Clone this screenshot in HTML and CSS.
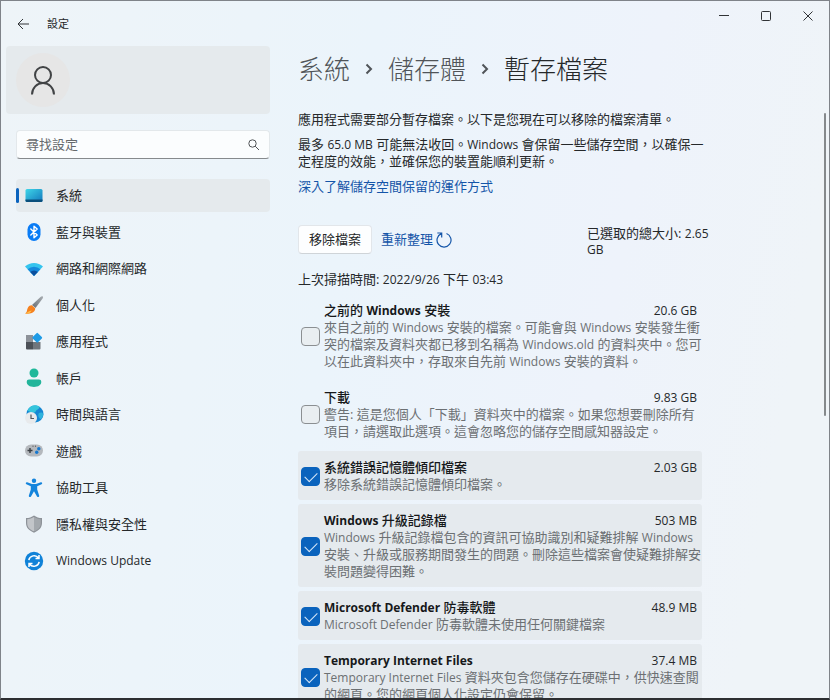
FILE: index.html
```html
<!DOCTYPE html>
<html lang="zh-Hant">
<head>
<meta charset="utf-8">
<meta name="viewport" content="width=device-width, initial-scale=1">
<title>設定</title>
<link rel="stylesheet" href="styles.css">
</head>
<body>
<div class="window">
	<!-- S 標題列 -->
	<header class="titlebar">
		<button class="bt_back" aria-label="返回"><svg width="12" height="12" viewBox="0 0 12 12"><path d="M6 1 1 6l5 5M1 6h11"/></svg></button>
		<span class="title">設定</span>
		<div class="win_op">
			<button aria-label="最小化"><svg width="10" height="10" viewBox="0 0 10 10"><path d="M0 4.500h10"/></svg></button>
			<button aria-label="最大化"><svg width="10" height="10" viewBox="0 0 10 10"><rect x=".5" y=".5" width="9" height="9" rx="1"/></svg></button>
			<button aria-label="關閉"><svg width="10" height="10" viewBox="0 0 10 10"><path d="M.5.5l9 9M9.5.5l-9 9"/></svg></button>
		</div>
	</header>
	<!-- E 標題列 -->
	<div class="body">
		<!-- S 側邊欄 -->
		<aside class="side">
			<div class="user_info">
				<span class="pic"><svg width="28" height="32" viewBox="0 0 28 32"><circle cx="14" cy="11" r="8"/><path d="M3 30.500a11 11.500 0 0 1 22 0"/></svg></span>
			</div>
			<div class="search">
				<input type="search" placeholder="尋找設定" aria-label="尋找設定">
				<svg width="12" height="12" viewBox="0 0 12 12"><circle cx="4.500" cy="4.500" r="3.700"/><path d="M7.200 7.200 11 11"/></svg>
			</div>
			<nav>
				<ul class="menu">
					<li><a href="#" class="on"><svg viewBox="0 0 20 20"><defs><linearGradient id="gSys" x1="0" y1="0" x2="1" y2="1"><stop offset="0" stop-color="#3fd6e8"/><stop offset="1" stop-color="#1277bd"/></linearGradient></defs><rect x="1.500" y="3" width="17" height="13" rx="1.500" fill="url(#gSys)"/><path d="M1.500 13.500h17v1a1.500 1.500 0 0 1-1.500 1.500H3a1.500 1.500 0 0 1-1.500-1.500z" fill="#0a4f7c"/></svg>系統</a></li>
					<li><a href="#"><svg viewBox="0 0 20 20"><rect x="3.500" y="1" width="13" height="18" rx="6.500" fill="#0a7cf5"/><path d="m6.800 7 6.400 6-3.200 2.800V4.200L13.200 7l-6.400 6" fill="none" stroke="#fff" stroke-width="1.400" stroke-linejoin="round" stroke-linecap="round"/></svg>藍牙與裝置</a></li>
					<li><a href="#"><svg viewBox="0 0 20 20"><path d="M1 7.500a13 13 0 0 1 18 0L10 17z" fill="#35c4ee"/><path d="M3.600 10.300a9.200 9.200 0 0 1 12.800 0L10 17z" fill="#1589dc"/><path d="M6.200 13a5.500 5.500 0 0 1 7.600 0L10 17z" fill="#0b4f9e"/></svg>網路和網際網路</a></li>
					<li><a href="#"><svg viewBox="0 0 20 20"><defs><linearGradient id="gBr" x1="0" y1="1" x2="1" y2="0"><stop offset="0" stop-color="#696f76"/><stop offset="1" stop-color="#a9aeb3"/></linearGradient></defs><path d="M18.500 1.300c.9.700.6 1.400.1 2.200L11.500 13 8 10l8.500-8c.8-.7 1.400-1.100 2-.7z" fill="url(#gBr)"/><path d="M7.800 10.300 11.200 13.200c.3 3.300-3.600 6.300-10 5.200C3.700 17 2.500 15 4 12.500c.8-1.400 2.300-2.300 3.800-2.200z" fill="#f5811f"/><path d="M1.200 18.400c2.600-.9 3.500-2.800 6.500-3-1 2.200-3.400 3.500-6.500 3z" fill="#ffc04a"/></svg>個人化</a></li>
					<li><a href="#"><svg viewBox="0 0 20 20"><path d="M2 3h7v7H2z" fill="#8d9299"/><path d="M2 10h7v7.500H3a1 1 0 0 1-1-1z" fill="#4c5158"/><path d="M9 10h7.500v6.500a1 1 0 0 1-1 1H9z" fill="#70767d"/><rect x="9.500" y="2" width="7.500" height="7.500" rx="1" transform="rotate(45 13.250 5.750)" fill="#1e9be6"/></svg>應用程式</a></li>
					<li><a href="#"><svg viewBox="0 0 20 20"><circle cx="10" cy="5" r="4.500" fill="#1fb89a"/><path d="M5 11.500h10a2.300 2.300 0 0 1 2.300 2.300c0 3.200-3 5.200-7.300 5.200s-7.300-2-7.300-5.200A2.300 2.300 0 0 1 5 11.500z" fill="#22b59b"/></svg>帳戶</a></li>
					<li><a href="#"><svg viewBox="0 0 20 20"><circle cx="11" cy="9" r="8.500" fill="#1587d3"/><path d="M3.500 5.500C6 0 12-1 15.500 1.800c-.5 3-3 2.500-4 5-1 2-4.500 1-8-1.300z" fill="#35c5dc"/><path d="M15 8c2-1 3.500-.5 4.400 1-.2 2-1.200 4-2.700 5.300C14.500 13 13.500 10 15 8z" fill="#2eb3dc"/><circle cx="7" cy="13" r="6" fill="#e8eaec"/><path d="M7 9.500v4h3" fill="none" stroke="#50555b" stroke-width="1.200"/></svg>時間與語言</a></li>
					<li><a href="#"><svg viewBox="0 0 20 20"><rect x="1" y="3.500" width="18" height="12" rx="6" fill="#b4b8bd"/><path d="M6 7v5M3.500 9.500h5" stroke="#3b4046" stroke-width="1.500"/><circle cx="14.800" cy="7.700" r="1.700" fill="#1678d0"/><circle cx="12.700" cy="11.300" r="1.700" fill="#1678d0"/><circle cx="9" cy="5.200" r=".6" fill="#555"/><circle cx="11.500" cy="5.200" r=".6" fill="#555"/></svg>遊戲</a></li>
					<li><a href="#"><svg viewBox="0 0 20 20"><circle cx="10" cy="2.700" r="2.200" fill="#1484dc"/><path d="M3.200 4.200 8 6h4l4.800-1.800c1.400-.3 1.900 1.400.8 2L13.200 8.200v3.300l2 6.300c.2 1.200-1.500 1.800-2.200.6L10 13.200l-3 5.200c-.7 1.200-2.400.6-2.200-.6l2-6.300V8.200L2.400 6.200c-1.100-.6-.6-2.300.8-2z" fill="#1484dc"/></svg>協助工具</a></li>
					<li><a href="#"><svg viewBox="0 0 20 20"><path d="M10 1.500c2.300 1.700 5 2.500 8 2.600v5c0 4.400-2.800 7.500-8 9.600-5.200-2.100-8-5.200-8-9.600v-5c3-.1 5.700-.9 8-2.600z" fill="#8d9298"/><path d="M10 3c2 1.300 4.200 2 6.800 2.200v4c0 3.700-2.300 6.300-6.800 8.100z" fill="#a3a8ad"/><path d="M10 3C8 4.300 5.800 5 3.200 5.200v4c0 3.700 2.300 6.300 6.800 8.100z" fill="#c2c5c9"/></svg>隱私權與安全性</a></li>
					<li><a href="#"><svg viewBox="0 0 20 20"><circle cx="10" cy="10" r="9.200" fill="#1082d8"/><path d="M4.800 9.200A5.400 5.400 0 0 1 14.500 7M15.200 10.800A5.400 5.400 0 0 1 5.500 13M15 4v3.500h-3.500M5 16v-3.500h3.500" fill="none" stroke="#fff" stroke-width="1.500"/></svg><span class="en">Windows Update</span></a></li>
				</ul>
			</nav>
		</aside>
		<!-- E 側邊欄 -->
		<!-- S 內容 -->
		<main class="cont">
			<h1 class="crumb">
				<a href="#">系統</a>
				<svg width="8" height="12" viewBox="0 0 8 12"><path d="m1.500 1.500 4.500 4.500-4.500 4.500"/></svg>
				<a href="#">儲存體</a>
				<svg width="8" height="12" viewBox="0 0 8 12"><path d="m1.500 1.500 4.500 4.500-4.500 4.500"/></svg>
				<span>暫存檔案</span>
			</h1>
			<p class="msg">應用程式需要部分暫存檔案。以下是您現在可以移除的檔案清單。</p>
			<p class="msg">最多 <span class="en">65.0 MB</span> 可能無法收回。<span class="en">Windows</span> 會保留一些儲存空間，以確保一<br>定程度的效能，並確保您的裝置能順利更新。</p>
			<p class="msg"><a href="#">深入了解儲存空間保留的運作方式</a></p>
			<div class="op">
				<button class="bt_remove">移除檔案</button>
				<button class="bt_refresh">重新整理<svg width="16" height="16" viewBox="0 0 16 16"><path d="M10.500 1.500a7 7 0 1 1-5.200.1M1.300 1h4.400v4.400"/></svg></button>
				<p class="total">已選取的總大小: <span class="en">2.65<br>GB</span></p>
			</div>
			<p class="scan">上次掃描時間: <span class="en">2022/9/26</span> 下午 <span class="en">03:43</span></p>
			<ul class="files">
				<li>
					<input type="checkbox" id="f1">
					<div class="info">
						<label for="f1">之前的 <span class="en">Windows</span> 安裝</label><span class="size">20.6 GB</span>
						<p>來自之前的 <span class="en">Windows</span> 安裝的檔案。可能會與 <span class="en">Windows</span> 安裝發生衝<br>突的檔案及資料夾都已移到名稱為 <span class="en">Windows.old</span> 的資料夾中。您可<br>以在此資料夾中，存取來自先前 <span class="en">Windows</span> 安裝的資料。</p>
					</div>
				</li>
				<li>
					<input type="checkbox" id="f2">
					<div class="info">
						<label for="f2">下載</label><span class="size">9.83 GB</span>
						<p>警告: 這是您個人「下載」資料夾中的檔案。如果您想要刪除所有<br>項目，請選取此選項。這會忽略您的儲存空間感知器設定。</p>
					</div>
				</li>
				<li class="sel">
					<input type="checkbox" id="f3" checked>
					<div class="info">
						<label for="f3">系統錯誤記憶體傾印檔案</label><span class="size">2.03 GB</span>
						<p>移除系統錯誤記憶體傾印檔案。</p>
					</div>
				</li>
				<li class="sel">
					<input type="checkbox" id="f4" checked>
					<div class="info">
						<label for="f4"><span class="en">Windows</span> 升級記錄檔</label><span class="size">503 MB</span>
						<p><span class="en">Windows</span> 升級記錄檔包含的資訊可協助識別和疑難排解 <span class="en">Windows</span><br>安裝、升級或服務期間發生的問題。刪除這些檔案會使疑難排解安<br>裝問題變得困難。</p>
					</div>
				</li>
				<li class="sel">
					<input type="checkbox" id="f5" checked>
					<div class="info">
						<label for="f5"><span class="en">Microsoft Defender</span> 防毒軟體</label><span class="size">48.9 MB</span>
						<p><span class="en">Microsoft Defender</span> 防毒軟體未使用任何關鍵檔案</p>
					</div>
				</li>
				<li class="sel">
					<input type="checkbox" id="f6" checked>
					<div class="info">
						<label for="f6"><span class="en">Temporary Internet Files</span></label><span class="size">37.4 MB</span>
						<p><span class="en">Temporary Internet Files</span> 資料夾包含您儲存在硬碟中，供快速查閱<br>的網頁。您的網頁個人化設定仍會保留。</p>
					</div>
				</li>
			</ul>
		</main>
		<!-- E 內容 -->
	</div>
	<span class="scroll"></span>
</div>
</body>
</html>
```
FILE: styles.css
```css
*{box-sizing:border-box;}
body,h1,p,ul{margin:0;padding:0;}
ul{list-style:none;}
a{color:inherit;text-decoration:none;}
body,button,input{font-family:"Open Sans","Noto Sans CJK TC",sans-serif;font-size:13px;line-height:17px;color:#25282a;}
button{padding:0;border:0 none;background:none;cursor:pointer;}
svg{flex:none;}
/* 西文比中文小一號 */
.en,.size{font-size:12px;}
.en{line-height:1;}

.window{position:relative;display:flex;flex-direction:column;height:100vh;overflow:hidden;border:1px solid #7f8389;border-bottom:2px solid #2c2e31;background:linear-gradient(100deg,#eef4f8 0,#ebf4fb 40%,#eef3fb 70%,#eff4f8 90%);}

/* S 標題列 */
.titlebar{display:flex;flex:none;align-items:center;height:45px;padding-left:16px;}
.titlebar svg{fill:none;stroke:#303336;stroke-width:1;}
.bt_back{display:flex;}
.titlebar .title{margin-left:18px;font-size:11px;}
.win_op{display:flex;align-self:flex-start;margin-left:auto;}
.win_op button{display:flex;align-items:center;justify-content:center;width:42px;height:29px;}
/* E 標題列 */

.body{display:flex;flex:1;min-height:0;}

/* S 側邊欄 */
.side{flex:none;width:269px;padding-left:5px;}
.user_info{display:flex;align-items:center;height:68px;padding-left:10px;border-radius:4px;background:#e5eaed;}
.user_info .pic{display:flex;align-items:center;justify-content:center;width:54px;height:54px;border-radius:50%;background:#e6e6e6;}
.user_info svg{fill:none;stroke:#414345;stroke-width:2;}
.search{display:flex;align-items:center;height:29px;margin:16px 0 20px 10px;padding:0 9px;border:1px solid #e3e8eb;border-bottom-color:#868a8d;border-radius:4px;background:#fbfdfe;}
.search input{flex:1;min-width:0;padding:0;border:0 none;outline:none;background:none;}
.search input::placeholder{color:#65696c;opacity:1;}
.search svg{fill:none;stroke:#505356;stroke-width:1;}
.menu{display:flex;flex-direction:column;justify-content:space-between;min-height:398px;margin-left:10px;}
.menu a{position:relative;display:flex;align-items:center;gap:12px;height:33px;padding-left:8px;border-radius:4px;}
.menu svg{width:20px;height:20px;}
.menu .on{background:#e5eaed;}
.menu .on:before{position:absolute;left:0;top:9px;width:3px;height:15px;border-radius:2px;background:#0a63bd;content:"";}
/* E 側邊欄 */

/* S 內容 */
.cont{flex:1;min-width:0;padding:7px 127px 0 28px;white-space:nowrap;overflow:hidden;}
.crumb{display:flex;align-items:center;margin-bottom:26px;font-size:26px;font-weight:300;line-height:32px;}
.crumb a{color:#505458;}
.crumb svg{margin:0 15px;fill:none;stroke:#505458;stroke-width:2;}
.msg{margin-bottom:8px;}
.msg a,.bt_refresh{color:#1455a8;}
.op{display:flex;align-items:flex-start;margin:30px 0 17px;}
.bt_remove{height:29px;padding:0 10px;border:1px solid #e2e6ea;border-bottom-color:#cfd4d8;border-radius:4px;background:#fdfeff;}
.bt_refresh{display:flex;align-items:center;gap:3px;height:29px;margin-left:9px;}
.bt_refresh svg{fill:none;stroke:#1455a8;stroke-width:1.200;}
.total{width:124px;margin:0 -9px -3px auto;line-height:16px;}
.scan{margin-bottom:6px;}
.files{display:flex;flex-direction:column;gap:4px;}
.files li{display:flex;align-items:center;gap:4px;padding:8px 5px 7px 3px;border-radius:3px;}
.files .sel{background:#e5eaee;}
.files input{flex:none;width:19px;height:19px;margin:0;border:1px solid #8b8f92;border-radius:4px;background:#e9eef1;appearance:none;}
.files input:checked{border-color:#0a63bd;background:#0a63bd;}
.files input:checked:before{display:block;width:11px;height:6px;margin:4px 0 0 3px;border:solid #d8e8f7;border-width:0 0 1px 1px;transform:rotate(-45deg);content:"";}
.info{display:grid;flex:1;min-width:0;grid-template-columns:1fr auto;}
.info label{font-weight:500;color:#16181a;}
.info label .en{font-weight:700;}
.info p{grid-column:1 / 3;color:#6c7073;}
/* E 內容 */

.scroll{position:absolute;right:3px;top:112px;width:2px;height:303px;border-radius:1px;background:#85898c;}
```
